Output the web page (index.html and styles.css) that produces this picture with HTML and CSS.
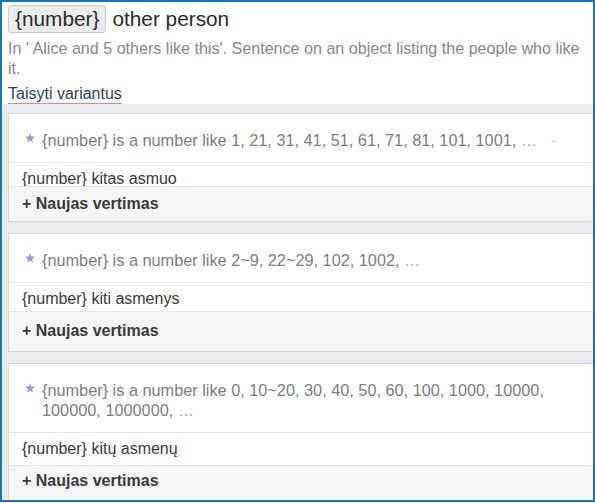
FILE: index.html
```html
<!DOCTYPE html>
<html lang="lt">
<head>
  <meta charset="UTF-8">
  <title>{number} other person</title>
  <link rel="stylesheet" href="styles.css">
</head>
<body>
  <div class="frame">
    <div class="head">
      <div class="title">
        <span class="chip">{number}</span>
        <span>other person</span>
      </div>
      <p class="desc">In ' Alice and 5 others like this'. Sentence on an object listing the people who like it.</p>
      <div class="edit"><a href="#">Taisyti variantus</a></div>
    </div>

    <div class="list">
      <div class="card">
        <div class="hint">
          <svg class="star" viewBox="0 0 10 10"><polygon points="5,0 6.2,3.6 10,3.7 7,6 8.1,9.6 5,7.5 1.9,9.6 3,6 0,3.7 3.8,3.6"/></svg>
          <span>{number} is a number like 1, 21, 31, 41, 51, 61, 71, 81, 101, 1001, <span class="dots">…</span><span class="dash">-</span></span>
        </div>
        <div class="translation">{number} kitas asmuo</div>
        <div class="add">+ Naujas vertimas</div>
      </div>

      <div class="card">
        <div class="hint">
          <svg class="star" viewBox="0 0 10 10"><polygon points="5,0 6.2,3.6 10,3.7 7,6 8.1,9.6 5,7.5 1.9,9.6 3,6 0,3.7 3.8,3.6"/></svg>
          <span>{number} is a number like 2~9, 22~29, 102, 1002, <span class="dots">…</span></span>
        </div>
        <div class="translation">{number} kiti asmenys</div>
        <div class="add">+ Naujas vertimas</div>
      </div>

      <div class="card">
        <div class="hint">
          <svg class="star" viewBox="0 0 10 10"><polygon points="5,0 6.2,3.6 10,3.7 7,6 8.1,9.6 5,7.5 1.9,9.6 3,6 0,3.7 3.8,3.6"/></svg>
          <span>{number} is a number like 0, 10~20, 30, 40, 50, 60, 100, 1000, 10000, 100000, 1000000, <span class="dots">…</span></span>
        </div>
        <div class="translation">{number} kitų asmenų</div>
        <div class="add">+ Naujas vertimas</div>
      </div>
    </div>
  </div>
</body>
</html>
```

FILE: styles.css
```css
* {
  box-sizing: border-box;
}

body {
  margin: 0;
  font-family: "Liberation Sans", Arial, sans-serif;
  font-size: 16px;
  color: #2b2b2b;
}

.frame {
  height: 502px;
  border: 2px solid #1f74ab;
  overflow: hidden;
  background: #e9eaed;
}

.head {
  background: white;
  padding: 3px 6px 0;
}

.title {
  display: flex;
  align-items: center;
  gap: 6px;
  font-size: 20.8px;
}

.chip {
  line-height: 26px;
  padding: 0 6px;
  background: #ebebec;
  border: 1px solid #cbcccf;
  border-radius: 3px;
}

.desc {
  margin: 5px 0 0;
  font-size: 16.1px;
  line-height: 20px;
  color: #86888d;
}

.edit {
  display: flex;
  margin-top: 6px;
}

.edit a {
  line-height: 19px;
  color: #2d3b5c;
  text-decoration: none;
  border-bottom: 1px solid #e58585;
}

.list {
  display: flex;
  flex-direction: column;
  gap: 11px;
  padding: 9px 0 0 6px;
}

.card {
  margin-right: -1px;
  background: white;
  border: 1px solid #d6d8db;
}

.hint {
  display: flex;
  align-items: flex-start;
  gap: 7px;
  padding: 16px 16px 12px;
  font-size: 16.3px;
  line-height: 20px;
  color: #7b7d82;
  border-bottom: 1px solid #e4e5e7;
}

.star {
  flex: none;
  width: 10px;
  height: 10px;
  margin-top: 3px;
  fill: #8d9cc6;
}

.dots {
  color: #a8aaae;
}

.dash {
  margin-left: 14px;
  color: #d4d5d8;
}

.translation {
  padding: 6px 13px 0;
  line-height: 20px;
  color: #3a3a3a;
  overflow: hidden;
}

.add {
  padding: 7px 13px 0;
  line-height: 20px;
  font-weight: bold;
  color: #3a3a3a;
  background: #f4f5f7;
  border-top: 1px solid #e4e5e8;
}

/* rows grow a little with each plural form */
.card:nth-child(1) .translation { height: 23px; }
.card:nth-child(1) .add { height: 35px; }
.card:nth-child(2) .translation { height: 28px; }
.card:nth-child(2) .add { height: 40px; padding-top: 9px; }
.card:nth-child(3) .translation { height: 32px; }
.card:nth-child(3) .add { height: 60px; padding-top: 5px; }
```
